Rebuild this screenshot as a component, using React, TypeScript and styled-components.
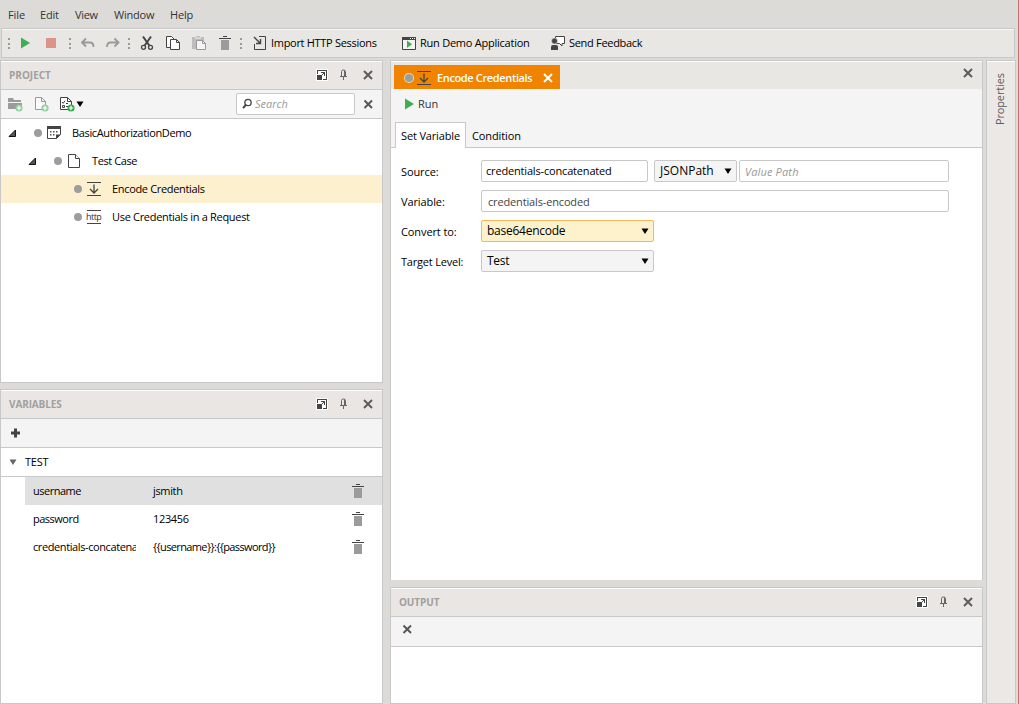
import React from "react";
import styled, { createGlobalStyle, css } from "styled-components";

const line = "#c8c8c8";

const GlobalStyle = createGlobalStyle`
  * { box-sizing: border-box; }
  html, body { margin: 0; padding: 0; }
  body {
    font-family: "Open Sans", "Noto Sans", sans-serif;
    font-size: 11px;
    line-height: 16px;
    color: #000;
    background: #dcdbd7;
    overflow: hidden;
  }
`;

const Window = styled.div`
  width: 1019px;
  height: 704px;
  display: flex;
  flex-direction: column;
  background: #dcdbd7;
  border-right: 1px solid #c9746a;
`;

const MenuBar = styled.nav`
  height: 28px;
  display: flex;
  align-items: center;
  padding: 2px 0 0 8px;
  color: #333;
`;

const Label = styled.span<{ $w?: number; $ls?: number; $ml?: number; $color?: string }>`
  display: block;
  flex: none;
  white-space: nowrap;
  width: ${(p) => (p.$w ? `${p.$w}px` : "auto")};
  letter-spacing: ${(p) => p.$ls ?? 0}px;
  margin-left: ${(p) => p.$ml ?? 0}px;
  color: ${(p) => p.$color ?? "inherit"};
`;

const Toolbar = styled.div`
  height: 30px;
  width: 1014px;
  margin-left: 1px;
  flex: none;
  display: flex;
  align-items: center;
  padding-left: 6px;
  background: #e8e7e3;
  border: 1px solid ${line};
  box-shadow: inset 0 1px 0 #f8f8f6;
`;

const Grip = styled.i<{ $ml?: number }>`
  flex: none;
  width: 2px;
  height: 11px;
  margin-left: ${(p) => p.$ml ?? 0}px;
  background: repeating-linear-gradient(to bottom, #999 0 2px, transparent 2px 4.5px);
`;

const Glyph = styled.svg<{ $ml?: number }>`
  display: block;
  flex: none;
  width: 16px;
  height: 16px;
  margin-left: ${(p) => p.$ml ?? 0}px;
`;

const Workspace = styled.div`
  flex: 1;
  min-height: 0;
  display: grid;
  grid-template-columns: 383px 593px 30px;
  column-gap: 7px;
  margin-top: 2px;
  & > :last-child { margin-left: -4px; }
`;

const Column = styled.div`
  display: flex;
  flex-direction: column;
  gap: 6px;
  min-height: 0;
`;

const Panel = styled.section<{ $h?: number; $open?: boolean }>`
  ${(p) => (p.$h ? css`height: ${p.$h}px; flex: none;` : css`flex: 1;`)}
  min-height: 0;
  display: flex;
  flex-direction: column;
  background: #fff;
  border: 1px solid ${line};
  ${(p) => p.$open && css`border-bottom: 0; margin-bottom: 1px;`}
`;

const PanelHeader = styled.header`
  height: 29px;
  flex: none;
  display: flex;
  align-items: center;
  padding: 0 6px 0 8px;
  background: #eae6e3;
  border-bottom: 1px solid ${line};
  box-shadow: inset 0 1px 0 #fff;
`;

const Title = styled.h2<{ $ls: number }>`
  flex: 1;
  margin: 0;
  font-size: 10px;
  font-weight: 700;
  letter-spacing: ${(p) => p.$ls}px;
  color: #a0a0a0;
`;

const PanelTools = styled.div<{ $h?: number; $pl?: number; $pb?: number }>`
  height: ${(p) => p.$h ?? 29}px;
  flex: none;
  display: flex;
  align-items: center;
  padding-left: ${(p) => p.$pl ?? 7}px;
  padding-bottom: ${(p) => p.$pb ?? 0}px;
  background: #f4f4f4;
  border-bottom: 1px solid ${line};
`;

const Search = styled.div`
  width: 119px;
  height: 22px;
  margin-left: 148px;
  display: flex;
  align-items: center;
  padding-left: 3px;
  border: 1px solid ${line};
  border-radius: 2px;
  background: #fff;
  color: #999;
  font-style: italic;
`;

const TreeRow = styled.div<{ $pl: number; $on?: boolean }>`
  height: 28px;
  display: flex;
  align-items: center;
  padding-left: ${(p) => p.$pl}px;
  background: ${(p) => (p.$on ? "#fdf0cf" : "transparent")};
`;

const Dot = styled.i<{ $ring?: boolean; $ml?: number }>`
  flex: none;
  width: 8px;
  height: 8px;
  margin-left: ${(p) => p.$ml ?? 0}px;
  border-radius: 50%;
  background: #9d9d9d;
  ${(p) => p.$ring && css`box-shadow: 0 0 0 1px #e4dccf;`}
`;

const GroupRow = styled.div`
  height: 29px;
  flex: none;
  display: flex;
  align-items: center;
  padding-left: 4px;
  border-bottom: 1px solid ${line};
`;

const VarRow = styled.div<{ $on?: boolean }>`
  height: 28px;
  margin-left: 24px;
  display: flex;
  align-items: center;
  padding-left: 8px;
  background: ${(p) => (p.$on ? "#e0e0e0" : "transparent")};
`;

const VarName = styled.span<{ $ls: number }>`
  flex: none;
  width: 103px;
  margin-right: 17px;
  overflow: hidden;
  white-space: nowrap;
  letter-spacing: ${(p) => p.$ls}px;
`;

const VarValue = styled.span<{ $ls: number }>`
  flex: none;
  width: 197px;
  letter-spacing: ${(p) => p.$ls}px;
`;

const TabStrip = styled.div`
  height: 28px;
  flex: none;
  display: flex;
  align-items: flex-start;
  justify-content: space-between;
  padding: 4px 6px 0 3px;
  background: #e8e7e3;
  box-shadow: inset 0 1px 0 #fff;
`;

const DocTab = styled.div`
  width: 166px;
  height: 24px;
  display: flex;
  align-items: center;
  padding: 1px 0 0 11px;
  background: #f08400;
  color: #fff;
  font-weight: 600;
`;

const RunBar = styled.div`
  height: 33px;
  flex: none;
  display: flex;
  align-items: center;
  padding: 0 0 3px 11px;
  background: #f4f4f4;
  color: #333;
`;

const SubTabs = styled.div`
  height: 26px;
  flex: none;
  display: flex;
  padding-left: 4px;
  background: #f4f4f4;
  border-bottom: 1px solid ${line};
`;

const SubTab = styled.div<{ $on?: boolean }>`
  height: 26px;
  display: flex;
  align-items: center;
  padding: 0 0 0 5px;
  font-weight: 500;
  ${(p) =>
    p.$on
      ? css`width: 71px; letter-spacing: -0.15px; background: #fff; border: 1px solid ${line}; border-bottom: 0;`
      : css`padding-left: 6px; padding-top: 1px; letter-spacing: -0.1px;`}
`;

const Form = styled.div`
  padding: 12px 0 0 10px;
  display: flex;
  flex-direction: column;
  gap: 8px;
`;

const FormRow = styled.div`
  height: 22px;
  display: flex;
  align-items: center;
`;

const FieldName = styled.label<{ $ls: number }>`
  width: 80px;
  flex: none;
  padding-top: 2px;
  font-weight: 500;
  letter-spacing: ${(p) => p.$ls}px;
`;

const Field = styled.div<{ $w: number; $ml?: number; $pl?: number; $pt?: number; $ls?: number; $kind?: "menu" | "hot"; $hint?: boolean }>`
  width: ${(p) => p.$w}px;
  height: 22px;
  flex: none;
  margin-left: ${(p) => p.$ml ?? 0}px;
  padding: ${(p) => p.$pt ?? 0}px 0 0 ${(p) => p.$pl ?? 4}px;
  letter-spacing: ${(p) => p.$ls ?? 0}px;
  display: flex;
  align-items: center;
  justify-content: space-between;
  border: 1px solid ${(p) => (p.$kind === "hot" ? "#f3b75f" : line)};
  border-radius: 2px;
  background: ${(p) => (p.$kind === "hot" ? "#fdf2cc" : p.$kind === "menu" ? "#f4f4f4" : "#fff")};
  ${(p) => p.$kind && css`font-size: 12px; font-weight: 500;`}
  ${(p) => p.$hint && css`color: #999; font-style: italic;`}
`;

const SideDock = styled.aside`
  width: 30px;
  border: 1px solid ${line};
  background: #ece8e5;
  box-shadow: inset 0 1px 0 #fff;
  display: flex;
  justify-content: center;
  padding: 12px 3px 0 0;
`;

const SideLabel = styled.span`
  writing-mode: vertical-rl;
  transform: rotate(180deg);
  height: 52px;
  line-height: 18px;
  color: #5c5c5c;
  white-space: nowrap;
  letter-spacing: -0.15px;
`;

type G = { ml?: number; color?: string };

const Play = ({ ml }: G) => (
  <Glyph $ml={ml} viewBox="0 0 16 16"><path d="M3 2.500v11l9-5.500z" fill="#3fae52" /></Glyph>
);
const Stop = ({ ml }: G) => (
  <Glyph $ml={ml} viewBox="0 0 16 16"><path d="M3 3h10v10H3z" fill="#dc9488" /></Glyph>
);
const Undo = ({ ml }: G) => (
  <Glyph $ml={ml} viewBox="0 0 16 16" fill="none" stroke="#999" strokeWidth="1.8">
    <path d="M6 3.500 2 7.500l4 4M2.500 7.500h7.500q3.500 0 3.500 4.500" />
  </Glyph>
);
const Redo = ({ ml }: G) => (
  <Glyph $ml={ml} viewBox="0 0 16 16" fill="none" stroke="#999" strokeWidth="1.8">
    <path d="m9.500 3.500 4 4-4 4M13 7.500H5.500q-3.500 0-3.500 4.500" />
  </Glyph>
);
const Cut = ({ ml }: G) => (
  <Glyph $ml={ml} viewBox="0 0 16 16" fill="none" stroke="#444">
    <path d="M4 1.500 10.300 10.500M12 1.500 5.700 10.500" strokeWidth="2" />
    <circle cx="4.500" cy="12.300" r="2" strokeWidth="1.300" />
    <circle cx="11.500" cy="12.300" r="2" strokeWidth="1.300" />
  </Glyph>
);
const Copy = ({ ml }: G) => (
  <Glyph $ml={ml} viewBox="0 0 16 16" fill="#fff" stroke="#444">
    <path d="M1.500 1.500h5l3 3v8h-8z" />
    <path d="M5.500 4.500h6l3 3v7h-9z" />
    <path d="M11.500 4.500v3h3" fill="none" />
  </Glyph>
);
const Paste = ({ ml }: G) => (
  <Glyph $ml={ml} viewBox="0 0 16 16">
    <path d="M1 2h12v12H1zM5 1h4v1H5z" fill="#bdbdbd" />
    <path d="M4 3h6" stroke="#eee" />
    <path d="M5.500 5.500h6l3 3v6h-9z" fill="#f5f5f3" stroke="#999" />
    <path d="M11.500 5.500v3h3" fill="none" stroke="#999" />
  </Glyph>
);
const Trash = ({ ml }: G) => (
  <Glyph $ml={ml} viewBox="0 0 16 16" shapeRendering="crispEdges">
    <path d="M6 1h4v1H6zM2 3h12v1H2z" fill="#444" />
    <path d="M4 5h8v10H4z" fill="#9b9b9b" />
  </Glyph>
);
const ImportIcon = ({ ml }: G) => (
  <Glyph $ml={ml} viewBox="0 0 16 16" fill="none" stroke="#444">
    <path d="M7 1.500h6.500v13h-11V9" />
    <path d="M2 2l6 6M8.500 4v4.500H4" strokeWidth="1.400" />
  </Glyph>
);
const DemoIcon = ({ ml }: G) => (
  <Glyph $ml={ml} viewBox="0 0 16 16">
    <path d="M1.500 2.500h13v12h-13z" fill="#f4f4f2" stroke="#444" />
    <path d="M1 2h14v3H1z" fill="#444" />
    <path d="M9 3h1v1H9zM11 3h1v1h-1zM13 3h1v1h-1z" fill="#fff" />
    <path d="M6 5.500v7.500l5-3.750z" fill="#3fae52" />
  </Glyph>
);
const FeedbackIcon = ({ ml }: G) => (
  <Glyph $ml={ml} viewBox="0 0 16 16">
    <path d="M5.500 1.500h9v7h-2.500v2.500L9.500 8.500h-4z" fill="#fff" stroke="#444" />
    <circle cx="4.500" cy="6" r="3" fill="#444" stroke="#e8e7e3" strokeWidth=".6" />
    <path d="M1 15v-3q0-2 2-2h3q2 0 2 2v3z" fill="#444" />
  </Glyph>
);
const Popout = ({ ml }: G) => (
  <Glyph $ml={ml} viewBox="0 0 16 16" shapeRendering="crispEdges">
    <path d="M2 2h12v12H2z" fill="#fff" />
    <path d="M3 3h10v10H9v-1h3V4H4v3H3zM3 8h5v5H3z" fill="#444" />
    <path d="M7 5h4v4h-1V7H9v1H8V7h1V6H7z" fill="#444" />
  </Glyph>
);
const Pin = ({ ml }: G) => (
  <Glyph $ml={ml} viewBox="0 0 16 16" fill="none" stroke="#666">
    <path d="M5.500 9V4.500q0-1.500 2-1.500t2 1.500V9M4 9.500h7M7.500 9.500V13" />
    <path d="M8.500 3.500V9" />
  </Glyph>
);
const Cross = ({ ml, color = "#5c5c5c" }: G) => (
  <Glyph $ml={ml} viewBox="0 0 16 16"><path d="m4 4 8 8M12 4l-8 8" stroke={color} strokeWidth="2" /></Glyph>
);
const SmallCross = ({ ml }: G) => (
  <Glyph $ml={ml} viewBox="0 0 16 16"><path d="m4.500 4.500 7.500 7.500M12 4.500l-7.500 7.500" stroke="#555" strokeWidth="1.900" /></Glyph>
);
const Badge = ({ color }: { color: string }) => (
  <>
    <circle cx="12" cy="12" r="3.600" fill={color} />
    <path d="M12 9.800v4.400M9.800 12h4.400" stroke="#fff" strokeWidth="1.200" />
  </>
);
const FolderAdd = ({ ml }: G) => (
  <Glyph $ml={ml} viewBox="0 0 16 16">
    <path d="M1 2h5l1 2h7v2H1zM1 7h14v2L13 13H1z" fill="#9b9b9b" />
    <Badge color="#93cf9d" />
  </Glyph>
);
const PageAdd = ({ ml }: G) => (
  <Glyph $ml={ml} viewBox="0 0 16 16">
    <path d="M2.500 1.500h6l4 4v8h-10z" fill="#fafafa" stroke="#999" />
    <path d="M8.500 1.500v4h4" fill="none" stroke="#999" />
    <Badge color="#93cf9d" />
  </Glyph>
);
const StepAdd = ({ ml }: G) => (
  <Glyph $ml={ml} viewBox="0 0 16 16">
    <path d="M1.500 1.500h7l4 4v8h-11z" fill="#fff" stroke="#444" />
    <path d="M8.500 1.500v4h4M3 6l1.200 1.300L6 4.800M7 7.500h2M3.500 9.500h2v2h-2zM7 10.500h2" fill="none" stroke="#444" />
    <Badge color="#36a94a" />
  </Glyph>
);
const Arrow = ({ ml, color = "#000" }: G) => (
  <Glyph $ml={ml} viewBox="0 0 16 16"><path d="M4.500 5.500h7l-3.500 5.500z" fill={color} /></Glyph>
);
const Magnifier = ({ ml }: G) => (
  <Glyph $ml={ml} viewBox="0 0 16 16" fill="none" stroke="#444">
    <circle cx="8" cy="6.500" r="3.200" strokeWidth="1.300" /><path d="M5.800 9 3 12.200" strokeWidth="1.900" />
  </Glyph>
);
const Expander = ({ ml }: G) => (
  <Glyph $ml={ml} viewBox="0 0 16 16"><path d="M10.500 5v6.500H4z" fill="#555" stroke="#111" /></Glyph>
);
const ProjectIcon = ({ ml }: G) => (
  <Glyph $ml={ml} viewBox="0 0 16 16">
    <path d="M1.500 1.500h13v8l-4 4h-9z" fill="#fff" stroke="#444" />
    <path d="M1 1h14v3H1zM10 14V9.500h5z" fill="#444" />
    <path d="M4 6h1.500v1.500H4zM7 6h1.500v1.500H7zM10 6h1.500v1.500H10zM4 9h1.500v1.500H4zM7 9h1.500v1.500H7z" fill="#555" />
  </Glyph>
);
const PageIcon = ({ ml }: G) => (
  <Glyph $ml={ml} viewBox="0 0 16 16" fill="#fff" stroke="#444">
    <path d="M2.500 1.500h7l4 4v9h-11z" /><path d="M9.500 1.500v4h4" />
  </Glyph>
);
const SetVar = ({ ml }: G) => (
  <Glyph $ml={ml} viewBox="0 0 16 16" fill="none" stroke="#444">
    <path d="M1 1.500h14M1 14.500h14" /><path d="M8 3.500v8M4 8l4 4 4-4" strokeWidth="1.300" />
  </Glyph>
);
const Plus = ({ ml }: G) => (
  <Glyph $ml={ml} viewBox="0 0 16 16"><path d="M8.500 3.500v9M4 8h9" stroke="#444" strokeWidth="3" /></Glyph>
);

const HttpMark = styled.span`
  flex: none;
  width: 14px;
  height: 14px;
  margin: 0 1px 0 5px;
  border-top: 1px solid #444;
  border-bottom: 1px solid #444;
  font: 500 9px/11px "Open Sans", sans-serif;
  letter-spacing: -0.55px;
  text-indent: -1px;
  color: #333;
  white-space: nowrap;
`;

const HeaderTools = () => (
  <>
    <Popout />
    <Pin ml={6} />
    <Cross ml={8} />
  </>
);

const variables = [
  { name: "username", value: "jsmith", nls: -0.5, vls: -0.35 },
  { name: "password", value: "123456", nls: -0.5, vls: -0.35 },
  { name: "credentials-concatenated", value: "{{username}}:{{password}}", nls: -0.4, vls: -0.62 },
];

export default function App() {
  return (
    <Window>
      <GlobalStyle />
      <MenuBar>
        <Label $w={32} $ls={-0.1}>File</Label>
        <Label $w={35} $ls={-0.2}>Edit</Label>
        <Label $w={39} $ls={-0.3}>View</Label>
        <Label $w={56} $ls={-0.2}>Window</Label>
        <Label $ls={-0.2}>Help</Label>
      </MenuBar>
      <Toolbar>
        <Grip />
        <Play ml={8} />
        <Stop ml={9} />
        <Grip $ml={10} />
        <Undo ml={9} />
        <Redo ml={9} />
        <Grip $ml={7} />
        <Cut ml={9} />
        <Copy ml={10} />
        <Paste ml={10} />
        <Trash ml={10} />
        <Grip $ml={7} />
        <ImportIcon ml={10} />
        <Label $ml={3} $w={130} $ls={-0.3}>Import HTTP Sessions</Label>
        <DemoIcon />
        <Label $ml={3} $w={130} $ls={-0.24}>Run Demo Application</Label>
        <FeedbackIcon />
        <Label $ml={3} $ls={-0.3}>Send Feedback</Label>
      </Toolbar>
      <Workspace>
        <Column>
          <Panel $h={323}>
            <PanelHeader><Title $ls={0}>PROJECT</Title><HeaderTools /></PanelHeader>
            <PanelTools $pl={6}>
              <FolderAdd />
              <PageAdd ml={10} />
              <StepAdd ml={10} />
              <Arrow ml={-3} />
              <Search><Magnifier /><Label $ml={-1}>Search</Label></Search>
              <SmallCross ml={5} />
            </PanelTools>
            <TreeRow $pl={4}>
              <Expander /><Dot $ml={13} /><ProjectIcon ml={4} />
              <Label $ml={10} $ls={-0.35}>BasicAuthorizationDemo</Label>
            </TreeRow>
            <TreeRow $pl={24}>
              <Expander /><Dot $ml={13} /><PageIcon ml={4} />
              <Label $ml={10} $ls={-0.4}>Test Case</Label>
            </TreeRow>
            <TreeRow $pl={73} $on>
              <Dot /><SetVar ml={4} />
              <Label $ml={10} $ls={-0.33}>Encode Credentials</Label>
            </TreeRow>
            <TreeRow $pl={73}>
              <Dot /><HttpMark>http</HttpMark>
              <Label $ml={10} $ls={-0.31}>Use Credentials in a Request</Label>
            </TreeRow>
          </Panel>
          <Panel>
            <PanelHeader><Title $ls={-0.12}>VARIABLES</Title><HeaderTools /></PanelHeader>
            <PanelTools $pl={6}><Plus /></PanelTools>
            <GroupRow><Arrow color="#666" /><Label $ml={4} $ls={-0.2}>TEST</Label></GroupRow>
            {variables.map((v, i) => (
              <VarRow key={v.name} $on={i === 0}>
                <VarName $ls={v.nls}>{v.name}</VarName>
                <VarValue $ls={v.vls}>{v.value}</VarValue>
                <Trash />
              </VarRow>
            ))}
          </Panel>
        </Column>
        <Column>
          <Panel $h={520} $open>
            <TabStrip>
              <DocTab>
                <Dot $ring />
                <SetVar ml={3} />
                <Label $ml={5} $w={103} $ls={-0.36}>Encode Credentials</Label>
                <Cross color="#fff" />
              </DocTab>
              <Cross />
            </TabStrip>
            <RunBar><Play /><Label>Run</Label></RunBar>
            <SubTabs>
              <SubTab $on>Set Variable</SubTab>
              <SubTab>Condition</SubTab>
            </SubTabs>
            <Form>
              <FormRow>
                <FieldName $ls={-0.1}>Source:</FieldName>
                <Field $w={167} $ls={-0.17}>credentials-concatenated</Field>
                <Field $w={83} $ml={6} $pl={5} $kind="menu">JSONPath<Arrow /></Field>
                <Field $w={210} $ml={2} $pl={5} $pt={2} $ls={0.15} $hint>Value Path</Field>
              </FormRow>
              <FormRow>
                <FieldName $ls={-0.1}>Variable:</FieldName>
                <Field $w={468} $pl={6} $pt={2}><Label $color="#444" $ls={-0.15}>credentials-encoded</Label></Field>
              </FormRow>
              <FormRow>
                <FieldName $ls={-0.1}>Convert to:</FieldName>
                <Field $w={173} $pl={5} $ls={-0.25} $kind="hot">base64encode<Arrow /></Field>
              </FormRow>
              <FormRow>
                <FieldName $ls={-0.2}>Target Level:</FieldName>
                <Field $w={173} $pl={5} $ls={-0.25} $kind="menu">Test<Arrow /></Field>
              </FormRow>
            </Form>
          </Panel>
          <Panel>
            <PanelHeader><Title $ls={-0.1}>OUTPUT</Title><HeaderTools /></PanelHeader>
            <PanelTools $h={30} $pl={8} $pb={5}><SmallCross /></PanelTools>
          </Panel>
        </Column>
        <SideDock><SideLabel>Properties</SideLabel></SideDock>
      </Workspace>
    </Window>
  );
}
